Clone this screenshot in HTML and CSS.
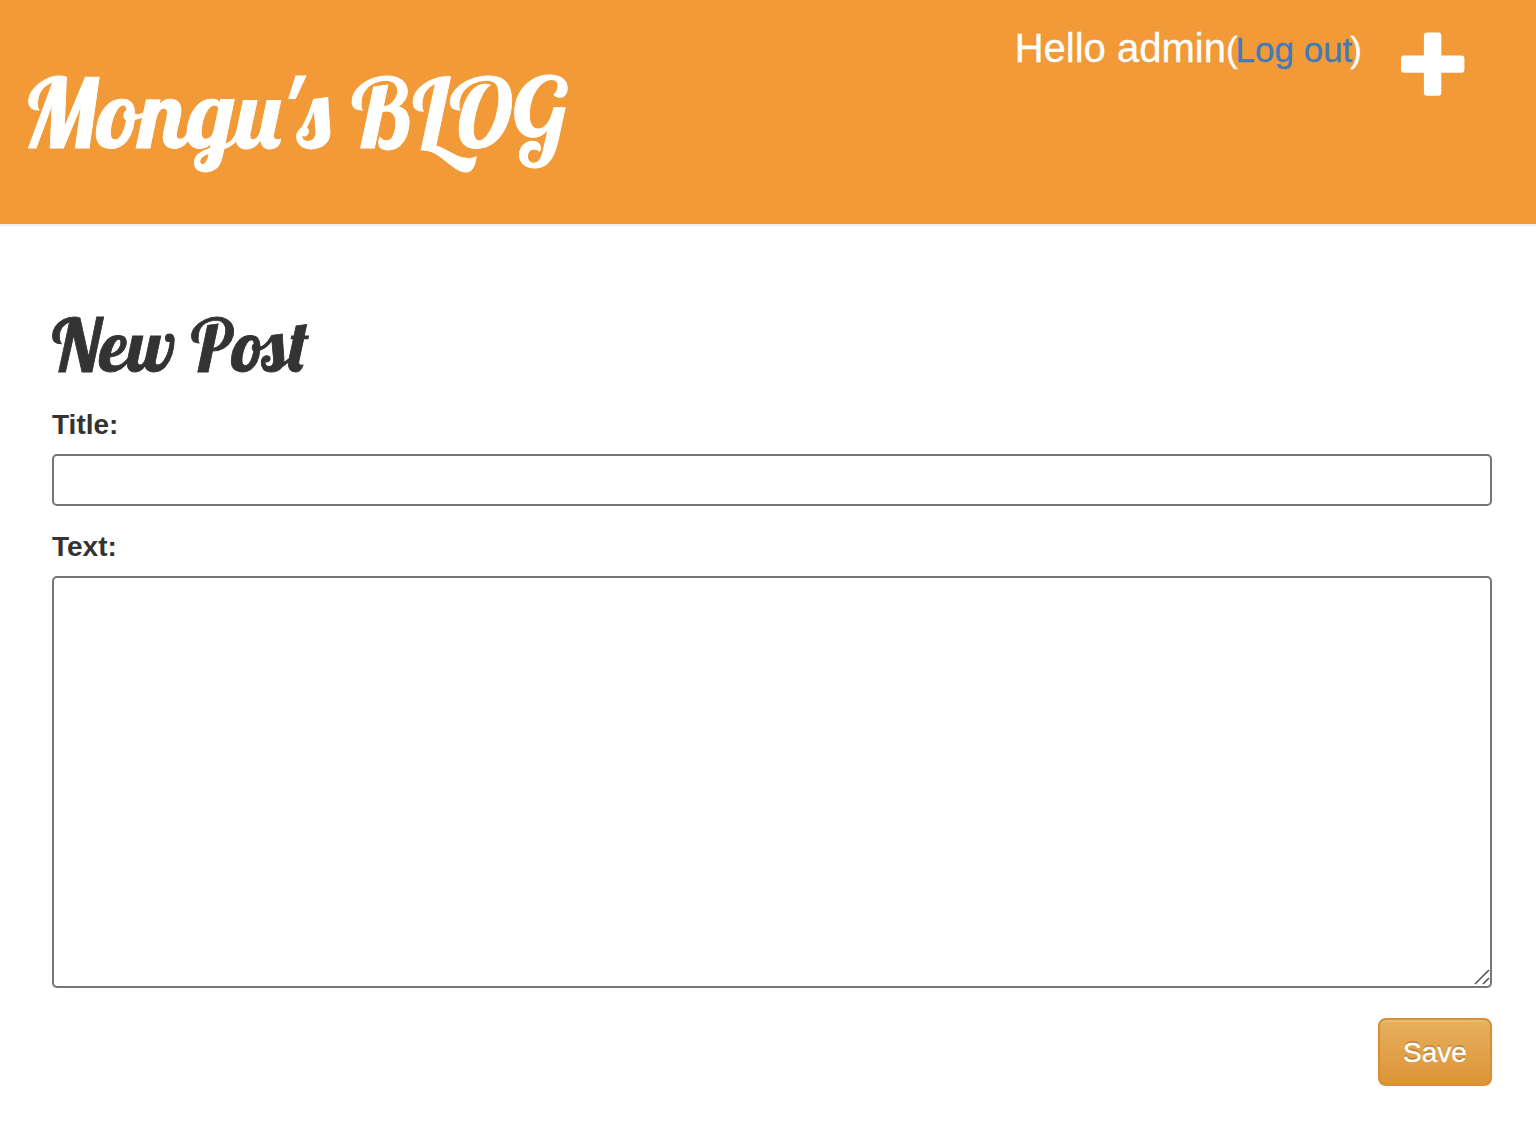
FILE: index.html
```html
<!DOCTYPE html>
<html lang="en">
<head>
  <meta charset="UTF-8">
  <title>Mongu's BLOG</title>
  <link rel="stylesheet" href="styles.css">
</head>
<body>
  <div class="page-header">
    <h1><a href="/">Mongu's BLOG</a></h1>
    <div class="top-menu">
      <p class="user">Hello admin<small>(<a href="/accounts/logout/">Log out</a>)</small></p>
      <a href="/post/new/" class="plus">
        <svg width="64" height="64" viewBox="0 0 64 64" fill="#fff">
          <rect x="22.9" y="0.4" width="17.4" height="63.4" rx="3"/>
          <rect x="0" y="23.4" width="63.4" height="17.4" rx="3"/>
        </svg>
      </a>
    </div>
  </div>

  <div class="content">
    <h2>New Post</h2>
    <form method="POST" class="post-form">
      <label for="id_title">Title:</label>
      <input type="text" name="title" id="id_title">
      <label for="id_text">Text:</label>
      <div class="text-box">
        <textarea name="text" id="id_text"></textarea>
        <svg class="grip" width="16" height="16" viewBox="0 0 16 16" stroke="#555" stroke-width="1.6" fill="none">
          <path d="M1 15L15 1M9 15L15 9"/>
        </svg>
      </div>
      <button type="submit" class="save">Save</button>
    </form>
  </div>
</body>
</html>
```

FILE: styles.css
```css
* { box-sizing: border-box; }
body { margin: 0; background: #fff; color: #333; font-family: "Helvetica Neue", Helvetica, "Liberation Sans", Arial, sans-serif; font-size: 28px; line-height: 40px; }
a { color: #428bca; text-decoration: none; }
h1, h2 { margin: 0; font-family: Lobster, "Liberation Serif", serif; font-weight: normal; white-space: nowrap; -webkit-text-stroke: 0.8px; }

.page-header { display: flex; justify-content: space-between; align-items: flex-start; height: 226px; padding: 0 71px 0 22px; background: #f19a37; border-bottom: 2px solid #eee; }
.page-header h1 { padding-top: 50px; font-size: 96px; line-height: 124px; }
.page-header h1 a { color: #fff; }

.top-menu { display: flex; align-items: flex-start; gap: 39px; padding-top: 32px; color: #fff; }
.user { margin: -4px 0 0; font-size: 40px; line-height: 40px; white-space: nowrap; -webkit-text-stroke: 0.3px; }
.user small { font-size: 35px; }
.user a { margin: 0 -2px 0 -2px; color: #437ab5; }
.plus { display: block; height: 64px; }
.plus svg { display: block; }

.content { padding: 79px 44px 0 52px; }
h2 { height: 99px; font-size: 72px; line-height: 80px; }

.post-form { display: flex; flex-direction: column; }
label { padding-top: 1px; margin-bottom: 9px; font-weight: bold; line-height: 40px; }
input, textarea { display: block; width: 100%; margin: 0; border: 2px solid #767676; border-radius: 5px; background: #fff; font: inherit; }
input { height: 52px; margin-bottom: 20px; }
textarea { height: 412px; resize: none; }
.text-box { position: relative; }
.grip { position: absolute; right: 2px; bottom: 3px; }
.save { align-self: flex-end; width: 114px; height: 68px; margin-top: 30px; padding: 1px 0 0; border: 2px solid #d88e35; border-radius: 8px; background: linear-gradient(#e6b05f, #dd9436); box-shadow: inset 0 2px 0 rgba(255,255,255,0.15), 0 2px 2px rgba(0,0,0,0.075); color: #fff; font: inherit; text-shadow: 0 -2px 0 rgba(0,0,0,0.2); cursor: pointer; -webkit-text-stroke: 0.3px; }
```
